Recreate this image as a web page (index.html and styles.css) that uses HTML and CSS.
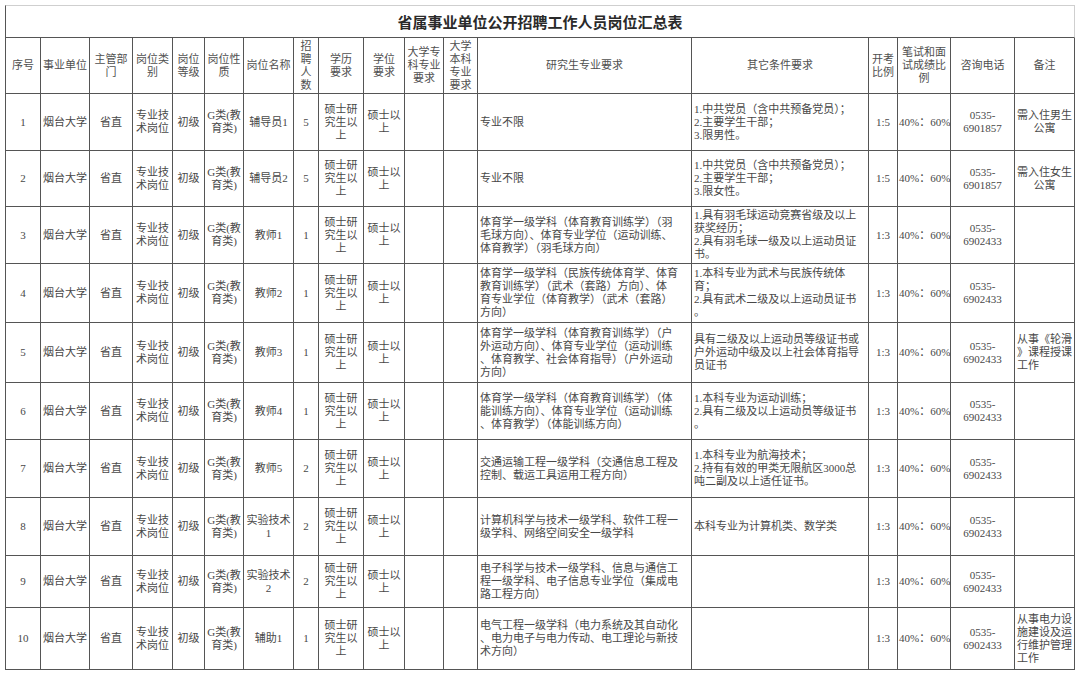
FILE: index.html
```html
<!DOCTYPE html>
<html lang="zh-CN">
<head>
<meta charset="utf-8">
<title>省属事业单位公开招聘工作人员岗位汇总表</title>
<link rel="stylesheet" href="styles.css">
</head>
<body>
<table class="sheet">
<colgroup>
<col class="c-no"><col class="c-unit"><col class="c-dept"><col class="c-type"><col class="c-level"><col class="c-nature"><col class="c-name"><col class="c-num"><col class="c-edu"><col class="c-deg"><col class="c-zk"><col class="c-bk"><col class="c-grad"><col class="c-other"><col class="c-ratio"><col class="c-score"><col class="c-tel"><col class="c-note">
</colgroup>
<tbody>
<tr class="r-title"><td class="title" colspan="18">省属事业单位公开招聘工作人员岗位汇总表</td></tr>
<tr class="r-head">
<td>序号</td><td>事业单位</td><td>主管部<br>门</td><td>岗位类<br>别</td><td>岗位<br>等级</td><td>岗位性<br>质</td><td>岗位名称</td><td>招<br>聘<br>人<br>数</td><td>学历<br>要求</td><td>学位<br>要求</td><td>大学专<br>科专业<br>要求</td><td>大学<br>本科<br>专业<br>要求</td><td>研究生专业要求</td><td>其它条件要求</td><td>开考<br>比例</td><td>笔试和面<br>试成绩比<br>例</td><td>咨询电话</td><td>备注</td>
</tr>
<tr class="r1">
<td>1</td><td>烟台大学</td><td>省直</td><td>专业技<br>术岗位</td><td>初级</td><td>G类(教<br>育类)</td><td>辅导员1</td><td>5</td><td>硕士研<br>究生以<br>上</td><td>硕士以<br>上</td><td></td><td></td>
<td class="left">专业不限</td>
<td class="left">1.中共党员（含中共预备党员）；<br>2.主要学生干部；<br>3.限男性。</td>
<td>1:5</td><td>40%：60%</td><td>0535-<br>6901857</td><td>需入住男生<br>公寓</td>
</tr>
<tr class="r2">
<td>2</td><td>烟台大学</td><td>省直</td><td>专业技<br>术岗位</td><td>初级</td><td>G类(教<br>育类)</td><td>辅导员2</td><td>5</td><td>硕士研<br>究生以<br>上</td><td>硕士以<br>上</td><td></td><td></td>
<td class="left">专业不限</td>
<td class="left">1.中共党员（含中共预备党员）；<br>2.主要学生干部；<br>3.限女性。</td>
<td>1:5</td><td>40%：60%</td><td>0535-<br>6901857</td><td>需入住女生<br>公寓</td>
</tr>
<tr class="r3">
<td>3</td><td>烟台大学</td><td>省直</td><td>专业技<br>术岗位</td><td>初级</td><td>G类(教<br>育类)</td><td>教师1</td><td>1</td><td>硕士研<br>究生以<br>上</td><td>硕士以<br>上</td><td></td><td></td>
<td class="left">体育学一级学科（体育教育训练学）（羽<br>毛球方向）、体育专业学位（运动训练、<br>体育教学）（羽毛球方向）</td>
<td class="left">1.具有羽毛球运动竞赛省级及以上<br>获奖经历；<br>2.具有羽毛球一级及以上运动员证<br>书。</td>
<td>1:3</td><td>40%：60%</td><td>0535-<br>6902433</td><td></td>
</tr>
<tr class="r4">
<td>4</td><td>烟台大学</td><td>省直</td><td>专业技<br>术岗位</td><td>初级</td><td>G类(教<br>育类)</td><td>教师2</td><td>1</td><td>硕士研<br>究生以<br>上</td><td>硕士以<br>上</td><td></td><td></td>
<td class="left">体育学一级学科（民族传统体育学、体育<br>教育训练学）（武术（套路）方向）、体<br>育专业学位（体育教学）（武术（套路）<br>方向）</td>
<td class="left">1.本科专业为武术与民族传统体<br>育；<br>2.具有武术二级及以上运动员证书<br>。</td>
<td>1:3</td><td>40%：60%</td><td>0535-<br>6902433</td><td></td>
</tr>
<tr class="r5">
<td>5</td><td>烟台大学</td><td>省直</td><td>专业技<br>术岗位</td><td>初级</td><td>G类(教<br>育类)</td><td>教师3</td><td>1</td><td>硕士研<br>究生以<br>上</td><td>硕士以<br>上</td><td></td><td></td>
<td class="left">体育学一级学科（体育教育训练学）（户<br>外运动方向）、体育专业学位（运动训练<br>、体育教学、社会体育指导）（户外运动<br>方向）</td>
<td class="left">具有二级及以上运动员等级证书或<br>户外运动中级及以上社会体育指导<br>员证书</td>
<td>1:3</td><td>40%：60%</td><td>0535-<br>6902433</td><td class="left">从事《轮滑<br>》课程授课<br>工作</td>
</tr>
<tr class="r6">
<td>6</td><td>烟台大学</td><td>省直</td><td>专业技<br>术岗位</td><td>初级</td><td>G类(教<br>育类)</td><td>教师4</td><td>1</td><td>硕士研<br>究生以<br>上</td><td>硕士以<br>上</td><td></td><td></td>
<td class="left">体育学一级学科（体育教育训练学）（体<br>能训练方向）、体育专业学位（运动训练<br>、体育教学）（体能训练方向）</td>
<td class="left">1.本科专业为运动训练；<br>2.具有二级及以上运动员等级证书<br>。</td>
<td>1:3</td><td>40%：60%</td><td>0535-<br>6902433</td><td></td>
</tr>
<tr class="r7">
<td>7</td><td>烟台大学</td><td>省直</td><td>专业技<br>术岗位</td><td>初级</td><td>G类(教<br>育类)</td><td>教师5</td><td>2</td><td>硕士研<br>究生以<br>上</td><td>硕士以<br>上</td><td></td><td></td>
<td class="left">交通运输工程一级学科（交通信息工程及<br>控制、载运工具运用工程方向）</td>
<td class="left">1.本科专业为航海技术；<br>2.持有有效的甲类无限航区3000总<br>吨二副及以上适任证书。</td>
<td>1:3</td><td>40%：60%</td><td>0535-<br>6902433</td><td></td>
</tr>
<tr class="r8">
<td>8</td><td>烟台大学</td><td>省直</td><td>专业技<br>术岗位</td><td>初级</td><td>G类(教<br>育类)</td><td>实验技术<br>1</td><td>2</td><td>硕士研<br>究生以<br>上</td><td>硕士以<br>上</td><td></td><td></td>
<td class="left">计算机科学与技术一级学科、软件工程一<br>级学科、网络空间安全一级学科</td>
<td class="left">本科专业为计算机类、数学类</td>
<td>1:3</td><td>40%：60%</td><td>0535-<br>6902433</td><td></td>
</tr>
<tr class="r9">
<td>9</td><td>烟台大学</td><td>省直</td><td>专业技<br>术岗位</td><td>初级</td><td>G类(教<br>育类)</td><td>实验技术<br>2</td><td>2</td><td>硕士研<br>究生以<br>上</td><td>硕士以<br>上</td><td></td><td></td>
<td class="left">电子科学与技术一级学科、信息与通信工<br>程一级学科、电子信息专业学位（集成电<br>路工程方向）</td>
<td class="left"></td>
<td>1:3</td><td>40%：60%</td><td>0535-<br>6902433</td><td></td>
</tr>
<tr class="r10">
<td>10</td><td>烟台大学</td><td>省直</td><td>专业技<br>术岗位</td><td>初级</td><td>G类(教<br>育类)</td><td>辅助1</td><td>1</td><td>硕士研<br>究生以<br>上</td><td>硕士以<br>上</td><td></td><td></td>
<td class="left">电气工程一级学科（电力系统及其自动化<br>、电力电子与电力传动、电工理论与新技<br>术方向）</td>
<td class="left"></td>
<td>1:3</td><td>40%：60%</td><td>0535-<br>6902433</td><td class="left">从事电力设<br>施建设及运<br>行维护管理<br>工作</td>
</tr>
</tbody>
</table>
</body>
</html>
```

FILE: styles.css
```css
html, body {
  margin: 0;
  padding: 0;
  background: #ffffff;
}

body {
  padding: 5px 0 0 5px;
  font-family: "Liberation Serif", "Noto Sans CJK SC", serif;
  font-size: 11px;
  line-height: 13px;
  color: #484848;
}

.sheet {
  table-layout: fixed;
  border-collapse: separate;
  border-spacing: 0;
  width: 1070px;
  border-left: 1px solid #555;
  border-top: 1px solid #cfcfcf;
}

.sheet td {
  border-right: 1px solid #555;
  border-bottom: 1px solid #555;
  padding: 0 1px;
  text-align: center;
  vertical-align: middle;
  white-space: nowrap;
  overflow: visible;
}

.sheet td.left {
  text-align: left;
  padding-left: 2px;
}

.c-no { width: 35px; }
.c-unit { width: 49px; }
.c-dept { width: 43px; }
.c-type { width: 40px; }
.c-level { width: 32px; }
.c-nature { width: 39px; }
.c-name { width: 50px; }
.c-num { width: 25px; }
.c-edu { width: 45px; }
.c-deg { width: 41px; }
.c-zk { width: 39px; }
.c-bk { width: 34px; }
.c-grad { width: 214px; }
.c-other { width: 177px; }
.c-ratio { width: 29px; }
.c-score { width: 53px; }
.c-tel { width: 64px; }
.c-note { width: 60px; }

.r-title { height: 32px; }
.r-head { height: 56px; }
.r1 { height: 57px; }
.r2 { height: 56px; }
.r3 { height: 57px; }
.r4 { height: 59px; }
.r5 { height: 60px; }
.r6 { height: 57px; }
.r7 { height: 58px; }
.r8 { height: 58px; }
.r9 { height: 52px; }
.r10 { height: 62px; }

.sheet td.title {
  font-family: "Noto Sans CJK SC", sans-serif;
  font-size: 15px;
  font-weight: 700;
  color: #2a2a2a;
  border-right-color: #cfcfcf;
}

.sheet tr.r-title td {
  border-bottom: 1px solid #555;
}

.sheet tr.r-head td {
  color: #505050;
}
```
